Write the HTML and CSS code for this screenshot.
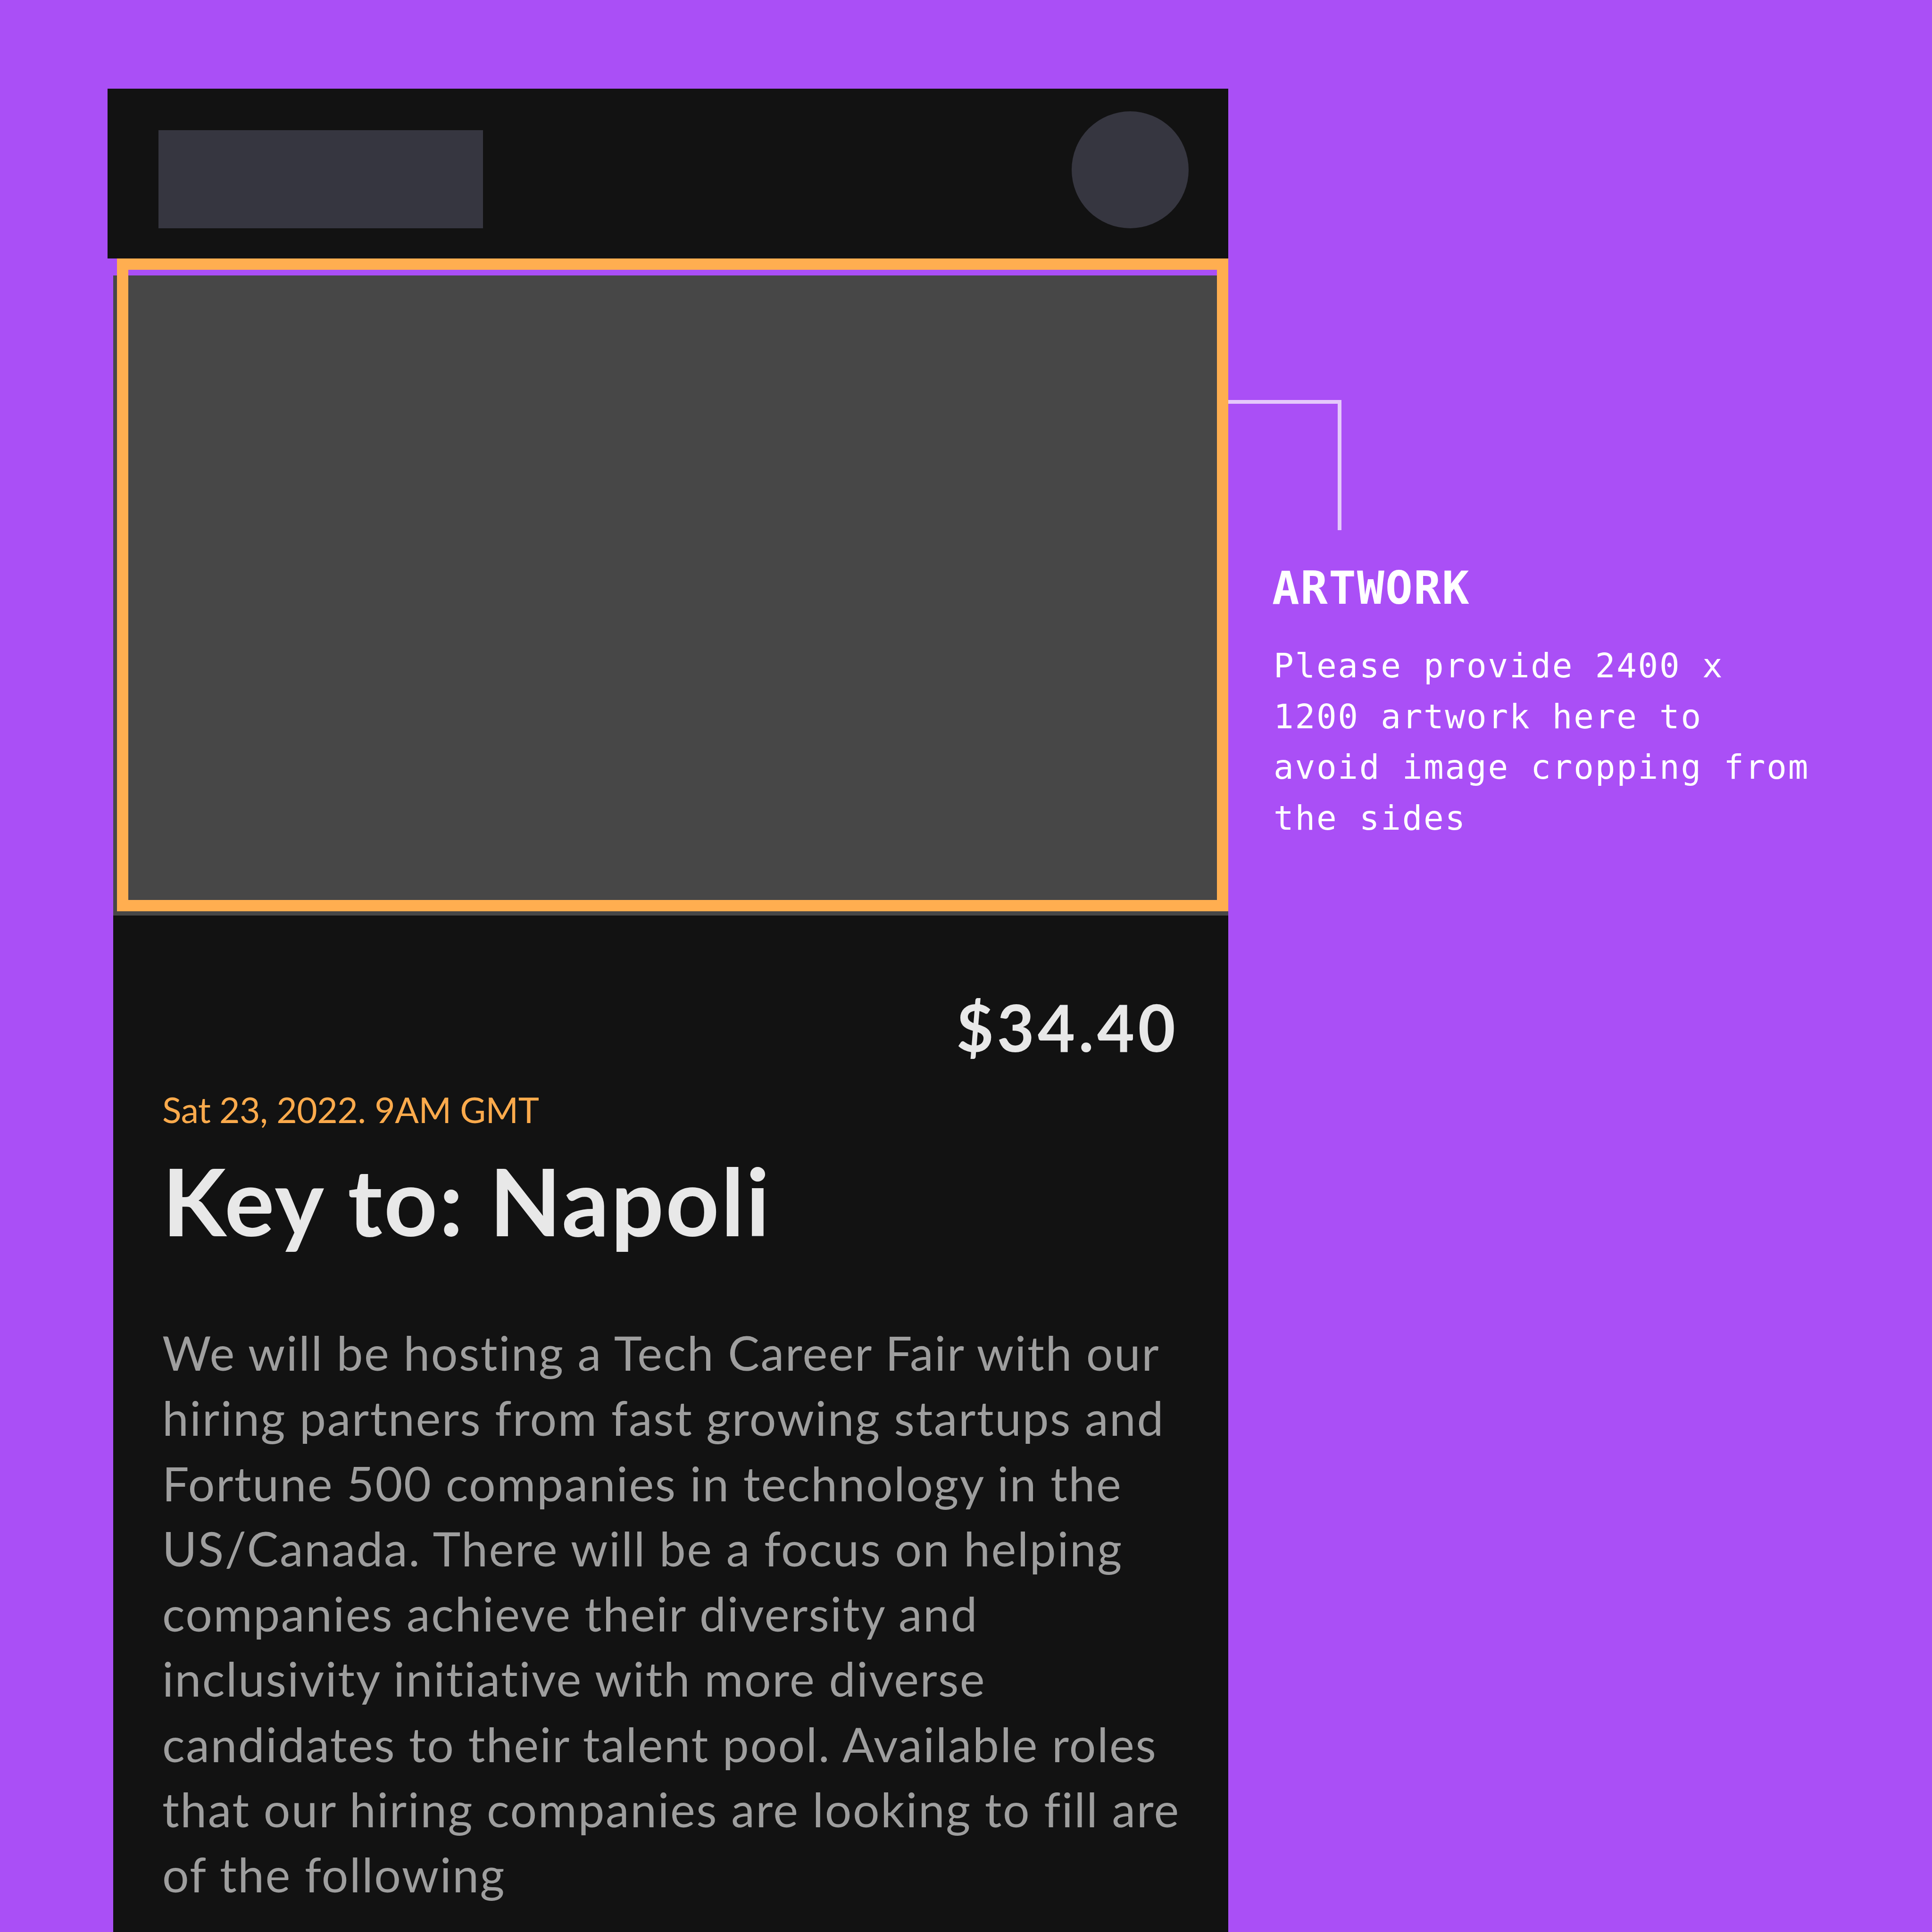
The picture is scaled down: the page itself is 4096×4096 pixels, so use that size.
FILE: index.html
```html
<!DOCTYPE html>
<html lang="en">
<head>
<meta charset="utf-8">
<title>Event artwork spec</title>
<link rel="stylesheet" href="styles.css">
</head>
<body>
<div class="canvas">
  <div class="phone">
    <header class="topbar">
      <div class="logo-ph"></div>
      <div class="avatar-ph"></div>
    </header>
    <section class="artwork">
      <div class="artwork-img"></div>
      <div class="artwork-frame"></div>
    </section>
    <section class="event">
      <div class="price">$34.40</div>
      <div class="date">Sat 23, 2022. 9AM GMT</div>
      <h1 class="title">Key to: Napoli</h1>
      <p class="desc">We will be hosting a Tech Career Fair with our<br>hiring partners from fast growing startups and<br>Fortune 500 companies in technology in the<br>US/Canada. There will be a focus on helping<br>companies achieve their diversity and<br>inclusivity initiative with more diverse<br>candidates to their talent pool. Available roles<br>that our hiring companies are looking to fill are<br>of the following</p>
    </section>
  </div>
  <aside class="note">
    <div class="leader"></div>
    <div class="note-body">
      <h2 class="note-title">ARTWORK</h2>
      <p class="note-text">Please provide 2400 x<br>1200 artwork here to<br>avoid image cropping from<br>the sides</p>
    </div>
  </aside>
</div>
</body>
</html>
```

FILE: styles.css
```css
html, body {
  margin: 0;
  padding: 0;
}

body {
  background: #aa4ff6;
  font-family: Lato, "Open Sans", sans-serif;
}

.canvas {
  display: flex;
  align-items: flex-start;
  padding: 188px 0 0 228px;
  min-height: 4096px;
  box-sizing: border-box;
  overflow: hidden;
}

.phone {
  width: 2376px;
  flex: none;
  display: flex;
  flex-direction: column;
}

/* ---------- top bar ---------- */
.topbar {
  height: 360px;
  box-sizing: border-box;
  background: #121212;
  display: flex;
  justify-content: space-between;
  align-items: flex-end;
  padding: 0 84px 64px 108px;
}

.logo-ph {
  width: 688px;
  height: 208px;
  background: #363640;
}

.avatar-ph {
  width: 248px;
  height: 248px;
  border-radius: 50%;
  background: #363640;
}

/* ---------- artwork ---------- */
.artwork {
  position: relative;
  margin-left: 12px;
  padding-top: 36px;
}

.artwork-img {
  height: 1357px;
  background: #474747;
}

.artwork-frame {
  position: absolute;
  left: 8px;
  top: 0;
  right: 0;
  bottom: 9px;
  border: 24px solid #ffae50;
}

/* ---------- event details ---------- */
.event {
  margin-left: 12px;
  background: #121212;
  padding: 168px 112px 120px 104px;
}

.price {
  text-align: right;
  font-size: 137px;
  line-height: 137px;
  font-weight: 700;
  letter-spacing: 7px;
  margin-right: -7px;
  color: #e8e8e8;
}

.date {
  margin-top: 69px;
  font-size: 75px;
  line-height: 75px;
  letter-spacing: -0.5px;
  color: #fbaa4c;
}

.title {
  margin: 56px 0 0;
  font-size: 198px;
  line-height: 198px;
  font-weight: 700;
  letter-spacing: 3.6px;
  color: #e8e8e8;
}

.desc {
  margin: 154px 0 0;
  font-size: 100px;
  line-height: 138.3px;
  letter-spacing: 2.5px;
  white-space: nowrap;
  color: #9e9e9e;
}

/* ---------- annotation ---------- */
.note {
  flex: none;
  display: flex;
  flex-direction: column;
  color: #ffffff;
  font-family: "DejaVu Sans Mono", "Liberation Mono", monospace;
}

.leader {
  margin-top: 660px;
  width: 240px;
  height: 276px;
  box-sizing: border-box;
  border-top: 8px solid #e5c8fb;
  border-right: 8px solid #e5c8fb;
}

.note-body {
  padding-left: 93px;
}

.note-title {
  margin: 75px 0 0;
  font-size: 96px;
  line-height: 96px;
  font-weight: 700;
  letter-spacing: 2.2px;
}

.note-text {
  margin: 63px 0 0 3px;
  font-size: 71px;
  line-height: 107.5px;
  letter-spacing: 2.7px;
  white-space: nowrap;
}
```
